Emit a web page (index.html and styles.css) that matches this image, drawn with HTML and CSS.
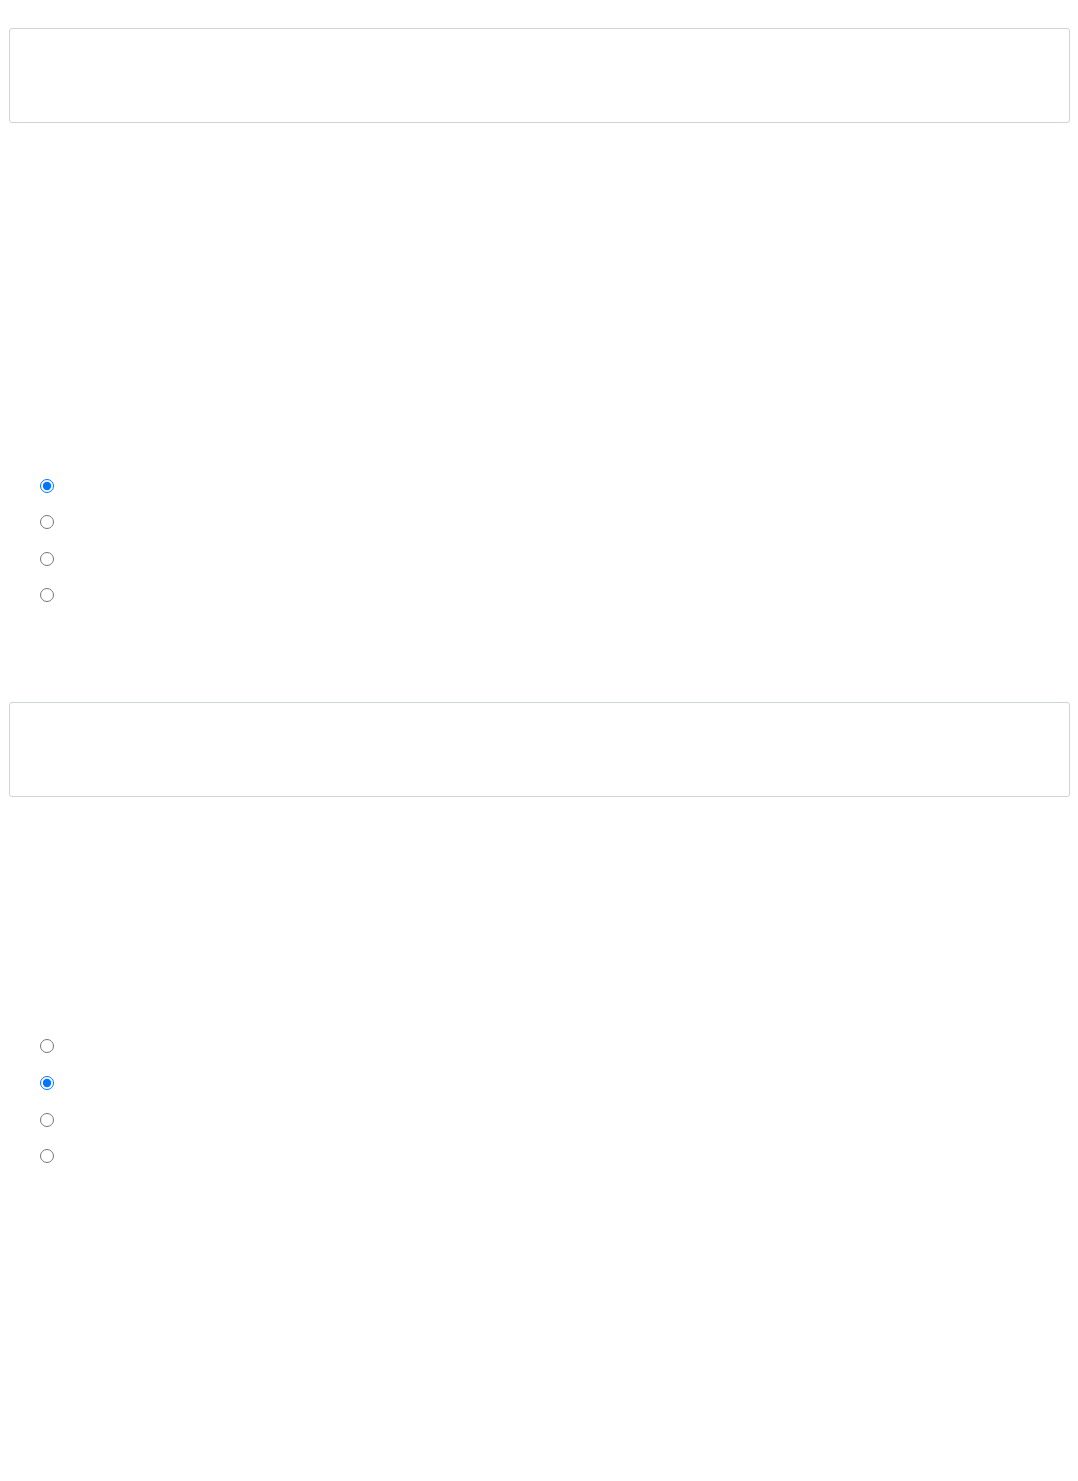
FILE: index.html
```html
<!DOCTYPE html>
<html lang="en">
<head>
<meta charset="utf-8">
<title>Form</title>
<link rel="stylesheet" href="styles.css">
</head>
<body>
<main class="page">
  <section class="block block-first">
    <div class="field-box"></div>
    <div class="radio-group group-a">
      <label class="radio-row"><input type="radio" name="q1" checked></label>
      <label class="radio-row"><input type="radio" name="q1"></label>
      <label class="radio-row"><input type="radio" name="q1"></label>
      <label class="radio-row"><input type="radio" name="q1"></label>
    </div>
  </section>
  <section class="block block-second">
    <div class="field-box"></div>
    <div class="radio-group group-b">
      <label class="radio-row"><input type="radio" name="q2"></label>
      <label class="radio-row"><input type="radio" name="q2" checked></label>
      <label class="radio-row"><input type="radio" name="q2"></label>
      <label class="radio-row"><input type="radio" name="q2"></label>
    </div>
  </section>
</main>
</body>
</html>
```
FILE: styles.css
```css
html, body {
  margin: 0;
  padding: 0;
  background: #ffffff;
  font-family: "Liberation Sans", Arial, sans-serif;
}

.page {
  width: 1078px;
  min-height: 1481px;
  padding-top: 28px;
  box-sizing: border-box;
}

.block {
  display: flex;
  flex-direction: column;
}

.block-second {
  margin-top: 76.83px;
}

.field-box {
  box-sizing: border-box;
  margin-left: 9px;
  width: 1061px;
  height: 95px;
  border: 1px solid #cdd3da;
  border-radius: 3px;
  background: #ffffff;
}

.radio-group {
  display: flex;
  flex-direction: column;
  margin-left: 40px;
}

.group-a {
  margin-top: 355.5px;
}

.group-b {
  margin-top: 242.5px;
}

.radio-row {
  display: block;
  height: 36.67px;
}

.radio-row input {
  display: block;
  margin: 0;
  width: 14px;
  height: 14px;
}
```
